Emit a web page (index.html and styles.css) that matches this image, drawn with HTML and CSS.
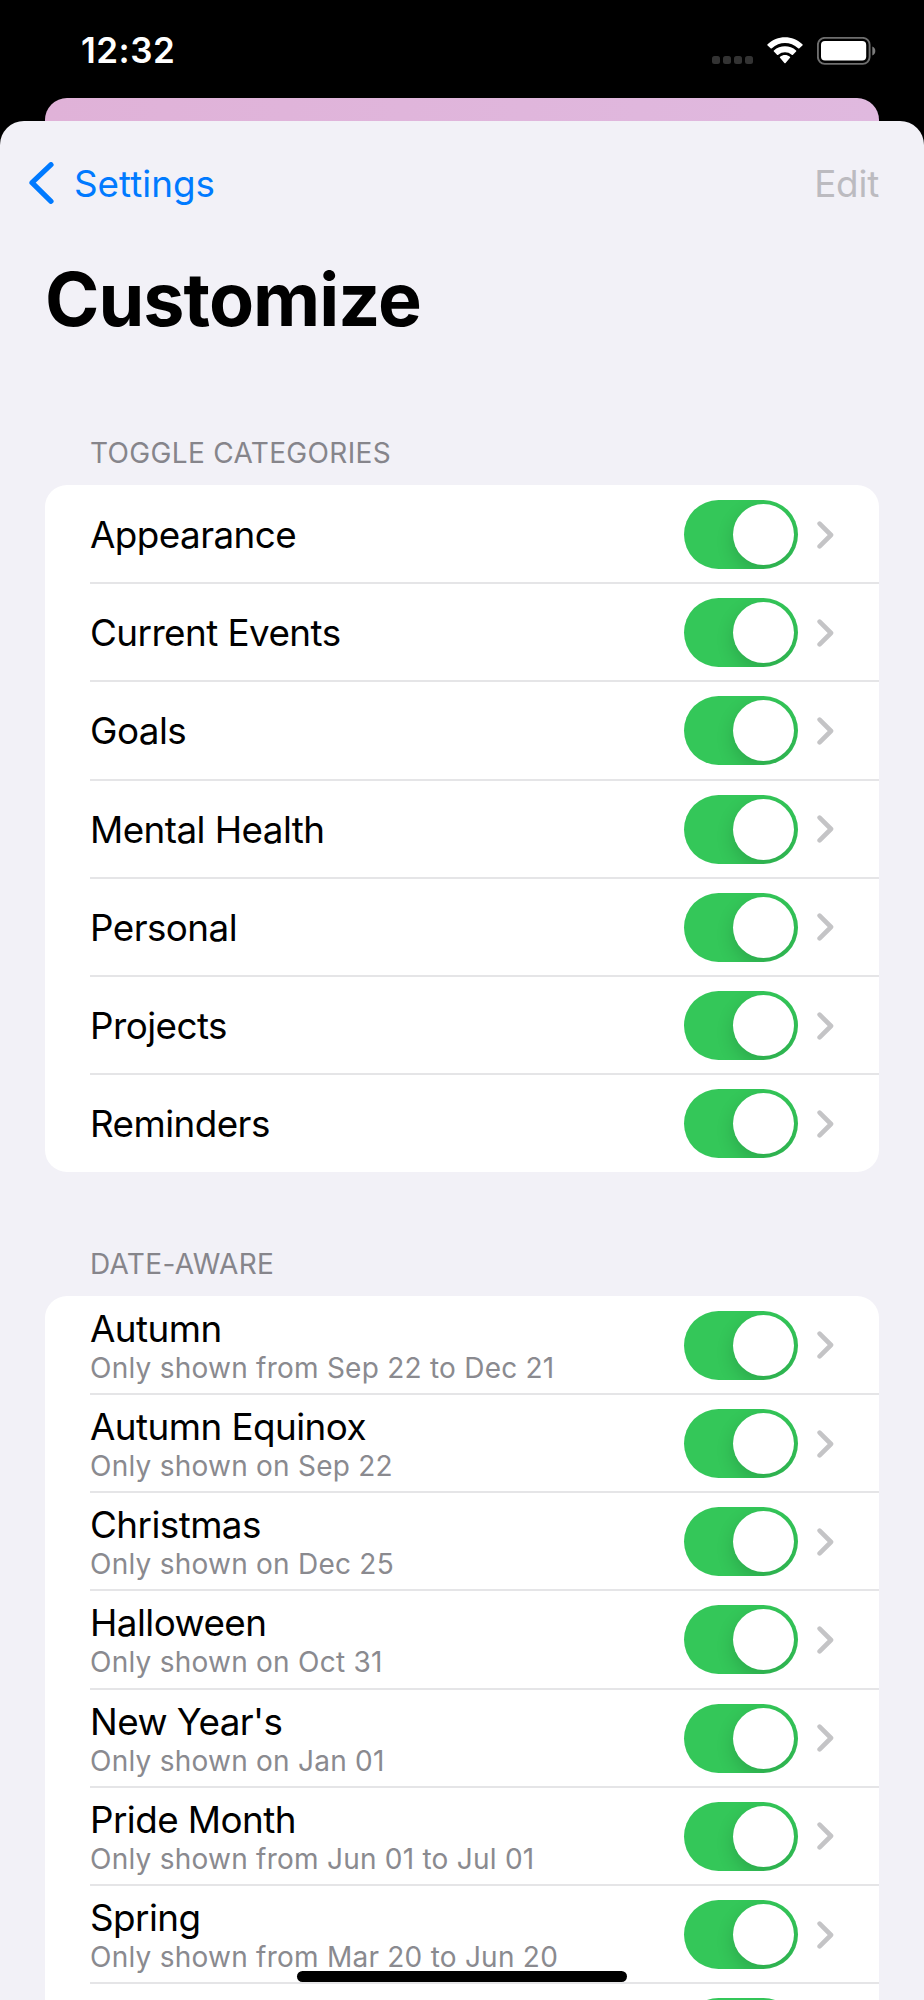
FILE: index.html
```html
<!DOCTYPE html>
<html lang="en">
<head>
    <meta charset="UTF-8">
    <meta name="viewport" content="width=device-width, initial-scale=1.0">
    <title>Customize</title>
    <link rel="stylesheet" href="styles.css">
</head>
<body>
    <svg class="symbols">
        <symbol id="chevron" viewBox="0 0 17 28">
            <path d="M2.6 2.6 L14 14 L2.6 25.4" fill="none" stroke="currentColor" stroke-width="4.6" stroke-linecap="round" stroke-linejoin="round"/>
        </symbol>
    </svg>

    <div class="status-bar">
        <div class="time">12:32</div>
        <div class="status-icons">
            <div class="cellular"><i></i><i></i><i></i><i></i></div>
            <svg class="wifi" viewBox="0 0 36 27">
                <path d="M0.6 8.6 Q0 8 0.6 7.3 C10 -2.2 26 -2.2 35.4 7.3 Q36 8 35.4 8.6 L32.4 11.3 Q31.8 11.9 31.1 11.3 C23.6 4.2 12.4 4.2 4.9 11.3 Q4.2 11.9 3.6 11.3 Z"/>
                <path d="M6.9 14.6 Q6.3 14 6.9 13.4 C13.2 7.8 22.8 7.8 29.1 13.4 Q29.7 14 29.1 14.6 L26 17.7 Q25.4 18.3 24.7 17.7 C20.8 14.4 15.2 14.4 11.3 17.7 Q10.6 18.3 10 17.7 Z"/>
                <path d="M13 20.8 Q12.4 20.2 13.1 19.7 C16 17.5 20 17.5 22.9 19.7 Q23.6 20.2 23 20.8 L18.6 25.9 Q18 26.5 17.4 25.9 Z"/>
            </svg>
            <svg class="battery" viewBox="0 0 60 28">
                <rect x="0.9" y="0.9" width="51.7" height="26" rx="6.8" fill="none" stroke="#6e6e6e" stroke-width="1.9"/>
                <rect x="4" y="4.1" width="45.2" height="19.4" rx="4"/>
                <path d="M55.3 9.4 Q58.3 10.8 58.3 14 Q58.3 17.2 55.3 18.6 Z" fill="#7c7c7c"/>
            </svg>
        </div>
    </div>

    <div class="back-card"></div>

    <div class="sheet">
        <div class="nav-bar">
            <a class="back">
                <svg class="back-icon" viewBox="0 0 25 42">
                    <path d="M22 2.7 L3 20.7 L22 39.3" fill="none" stroke="currentColor" stroke-width="5.2" stroke-linecap="round" stroke-linejoin="round"/>
                </svg>
                <span>Settings</span>
            </a>
            <span class="edit">Edit</span>
        </div>

        <h1>Customize</h1>

        <h2>TOGGLE CATEGORIES</h2>
        <ul class="list">
            <li class="row">
                <div class="label"><div class="title">Appearance</div></div>
                <div class="toggle"></div>
                <svg class="chevron"><use href="#chevron"/></svg>
            </li>
            <li class="row">
                <div class="label"><div class="title">Current Events</div></div>
                <div class="toggle"></div>
                <svg class="chevron"><use href="#chevron"/></svg>
            </li>
            <li class="row">
                <div class="label"><div class="title">Goals</div></div>
                <div class="toggle"></div>
                <svg class="chevron"><use href="#chevron"/></svg>
            </li>
            <li class="row">
                <div class="label"><div class="title">Mental Health</div></div>
                <div class="toggle"></div>
                <svg class="chevron"><use href="#chevron"/></svg>
            </li>
            <li class="row">
                <div class="label"><div class="title">Personal</div></div>
                <div class="toggle"></div>
                <svg class="chevron"><use href="#chevron"/></svg>
            </li>
            <li class="row">
                <div class="label"><div class="title">Projects</div></div>
                <div class="toggle"></div>
                <svg class="chevron"><use href="#chevron"/></svg>
            </li>
            <li class="row">
                <div class="label"><div class="title">Reminders</div></div>
                <div class="toggle"></div>
                <svg class="chevron"><use href="#chevron"/></svg>
            </li>
        </ul>

        <h2>DATE-AWARE</h2>
        <ul class="list">
            <li class="row">
                <div class="label">
                    <div class="title">Autumn</div>
                    <div class="subtitle">Only shown from Sep 22 to Dec 21</div>
                </div>
                <div class="toggle"></div>
                <svg class="chevron"><use href="#chevron"/></svg>
            </li>
            <li class="row">
                <div class="label">
                    <div class="title">Autumn Equinox</div>
                    <div class="subtitle">Only shown on Sep 22</div>
                </div>
                <div class="toggle"></div>
                <svg class="chevron"><use href="#chevron"/></svg>
            </li>
            <li class="row">
                <div class="label">
                    <div class="title">Christmas</div>
                    <div class="subtitle">Only shown on Dec 25</div>
                </div>
                <div class="toggle"></div>
                <svg class="chevron"><use href="#chevron"/></svg>
            </li>
            <li class="row">
                <div class="label">
                    <div class="title">Halloween</div>
                    <div class="subtitle">Only shown on Oct 31</div>
                </div>
                <div class="toggle"></div>
                <svg class="chevron"><use href="#chevron"/></svg>
            </li>
            <li class="row">
                <div class="label">
                    <div class="title">New Year's</div>
                    <div class="subtitle">Only shown on Jan 01</div>
                </div>
                <div class="toggle"></div>
                <svg class="chevron"><use href="#chevron"/></svg>
            </li>
            <li class="row">
                <div class="label">
                    <div class="title">Pride Month</div>
                    <div class="subtitle">Only shown from Jun 01 to Jul 01</div>
                </div>
                <div class="toggle"></div>
                <svg class="chevron"><use href="#chevron"/></svg>
            </li>
            <li class="row">
                <div class="label">
                    <div class="title">Spring</div>
                    <div class="subtitle">Only shown from Mar 20 to Jun 20</div>
                </div>
                <div class="toggle"></div>
                <svg class="chevron"><use href="#chevron"/></svg>
            </li>
            <li class="row">
                <div class="label"></div>
                <div class="toggle"></div>
                <svg class="chevron"><use href="#chevron"/></svg>
            </li>
        </ul>
    </div>

    <div class="home-indicator"></div>
</body>
</html>
```
FILE: styles.css
```css
* {
    box-sizing: border-box;
}

body {
    margin: 0;
    width: 924px;
    height: 2000px;
    overflow: hidden;
    display: flex;
    flex-direction: column;
    position: relative;
    background-color: #000;
    color: #000;
    font-family: Inter, "Liberation Sans", sans-serif;
    font-size: 36.8px;
}

.symbols {
    position: absolute;
    width: 0;
    height: 0;
}

/* Status bar */
.status-bar {
    flex: none;
    height: 98px;
    padding: 0 47px 0 81px;
    display: flex;
    justify-content: space-between;
    color: #fff;
}

.time {
    padding-top: 28px;
    font-size: 35px;
    line-height: 45px;
    font-weight: 600;
    letter-spacing: 0.5px;
}

.status-icons {
    display: flex;
    padding-top: 37px;
}

.status-icons svg {
    fill: #fff;
}

.cellular {
    display: flex;
    gap: 3px;
    padding-top: 19px;
    margin-right: 14px;
}

.cellular i {
    width: 8px;
    height: 8px;
    border-radius: 2.5px;
    background-color: #333;
}

.wifi {
    width: 36px;
    height: 27px;
    margin-right: 14px;
}

.battery {
    width: 60px;
    height: 28px;
}

/* Sheets */
.back-card {
    flex: none;
    height: 23px;
    margin: 0 45px;
    border-radius: 22px 22px 0 0;
    background: linear-gradient(to right, #e0b2d8, #e0b9df);
}

.sheet {
    flex: none;
    height: 1900px;
    padding: 0 45px;
    border-radius: 24px 24px 0 0;
    background-color: #f2f1f7;
}

.nav-bar {
    display: flex;
    justify-content: space-between;
    height: 125px;
    padding-top: 39px;
    margin-left: -16px;
    line-height: 48px;
}

.back {
    display: flex;
    color: #007aff;
}

.back-icon {
    width: 25px;
    height: 42px;
    margin: 2px 20px 0 0;
}

.edit {
    color: #bcbbc0;
    letter-spacing: -0.2px;
}

h1 {
    margin: 0;
    height: 183px;
    font-size: 73.6px;
    line-height: 108px;
    font-weight: 700;
    letter-spacing: -0.95px;
}

h2 {
    margin: 0;
    height: 56px;
    padding-left: 45px;
    font-size: 28px;
    line-height: 48px;
    font-weight: 400;
    letter-spacing: 0.33px;
    color: #86858b;
}

/* Lists */
.list {
    margin: 0 0 67.5px;
    padding: 0;
    list-style: none;
    border-radius: 22px;
    background-color: #fff;
}

.row {
    display: flex;
    align-items: center;
    height: 98.2px;
    padding-top: 1px;
    margin-left: 45px;
    padding-right: 45px;
    position: relative;
}

.row:not(:last-child)::after {
    content: "";
    position: absolute;
    left: 0;
    right: 0;
    bottom: -1px;
    height: 2px;
    background-color: #e5e5e7;
}

.label {
    flex: 1;
}

.title {
    line-height: 45px;
    letter-spacing: -0.55px;
}

.subtitle {
    font-size: 28px;
    line-height: 34px;
    letter-spacing: 0.24px;
    color: #8a8a8f;
}

.toggle {
    width: 114px;
    height: 69px;
    padding: 4px;
    margin-right: 19px;
    border-radius: 35px;
    overflow: hidden;
    background-color: #34c759;
}

.toggle::before {
    content: "";
    display: block;
    width: 61px;
    height: 61px;
    margin-left: auto;
    border-radius: 50%;
    background-color: #fff;
    box-shadow: 0 7px 18px rgba(0, 0, 0, 0.16);
}

.chevron {
    width: 17px;
    height: 28px;
    color: #c4c4c6;
}

.home-indicator {
    position: absolute;
    left: 297px;
    bottom: 18px;
    width: 330px;
    height: 11px;
    border-radius: 6px;
    background-color: #000;
}
```
